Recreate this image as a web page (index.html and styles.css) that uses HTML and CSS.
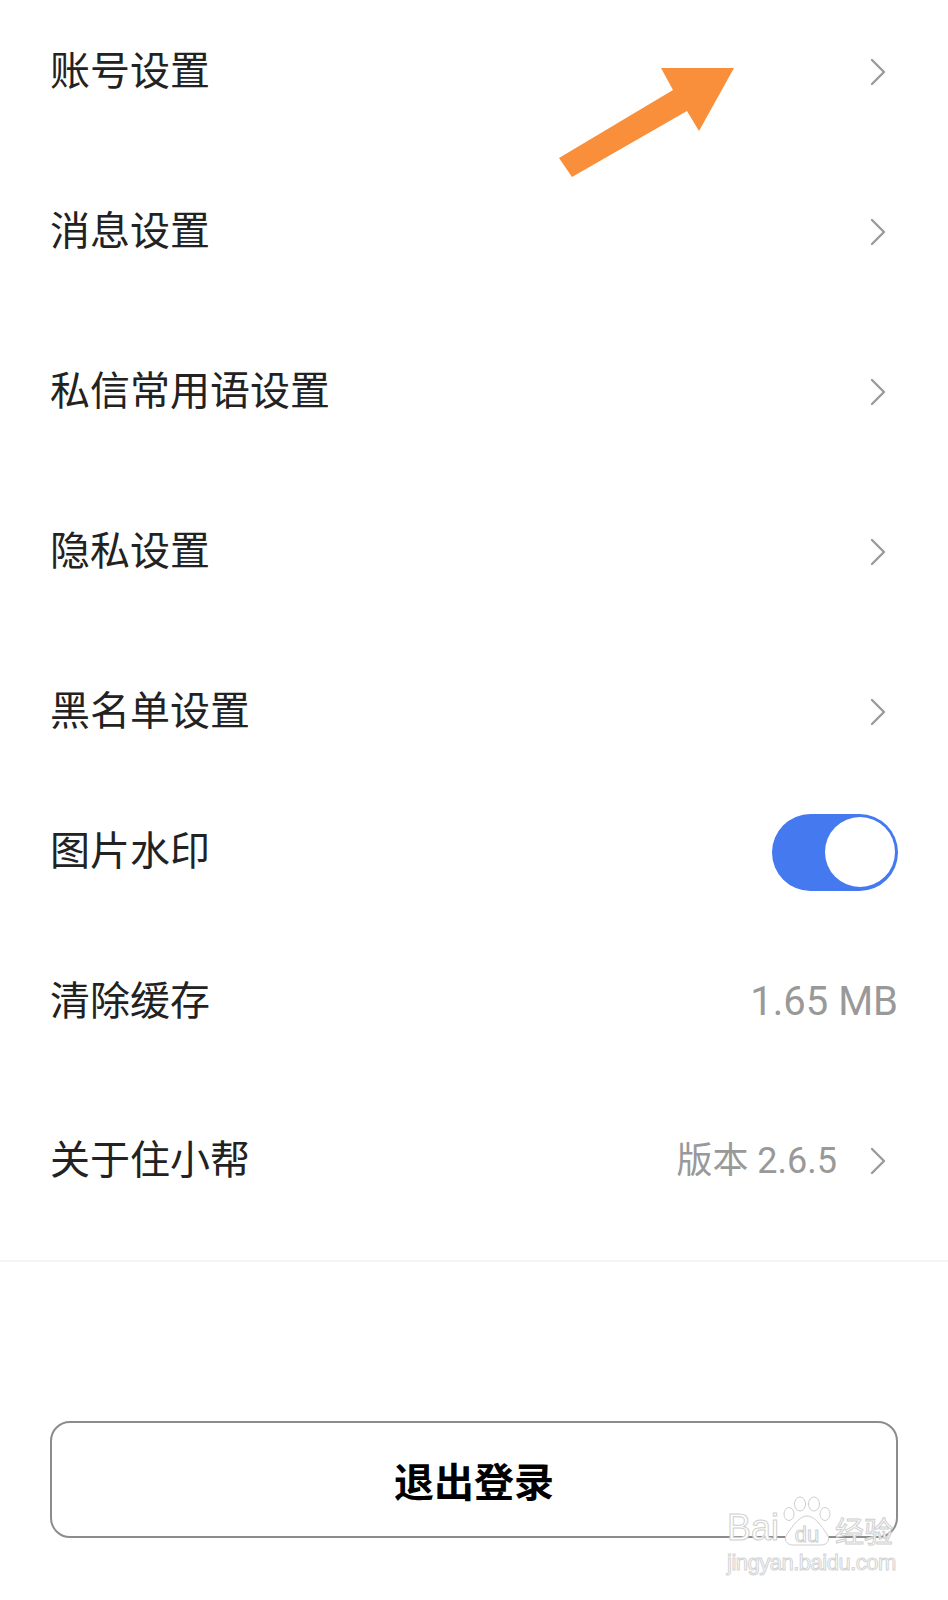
FILE: index.html
```html
<!DOCTYPE html>
<html lang="zh-CN">
<head>
  <meta charset="UTF-8" />
  <meta name="viewport" content="width=device-width, initial-scale=1.0"/>
  <title>设置</title>
  <link rel="stylesheet" href="styles.css">
</head>
<body>
  <div class="page">
    <!-- 设置列表 -->
    <div class="list">
      <div class="row">
        <span class="label">账号设置</span>
        <svg class="chevron" viewBox="0 0 16 28"><path d="M2 2 L14 14 L2 26" /></svg>
      </div>
      <div class="row">
        <span class="label">消息设置</span>
        <svg class="chevron" viewBox="0 0 16 28"><path d="M2 2 L14 14 L2 26" /></svg>
      </div>
      <div class="row">
        <span class="label">私信常用语设置</span>
        <svg class="chevron" viewBox="0 0 16 28"><path d="M2 2 L14 14 L2 26" /></svg>
      </div>
      <div class="row">
        <span class="label">隐私设置</span>
        <svg class="chevron" viewBox="0 0 16 28"><path d="M2 2 L14 14 L2 26" /></svg>
      </div>
      <div class="row">
        <span class="label">黑名单设置</span>
        <svg class="chevron" viewBox="0 0 16 28"><path d="M2 2 L14 14 L2 26" /></svg>
      </div>
      <div class="row row-switch">
        <span class="label">图片水印</span>
        <div class="switch on"><div class="knob"></div></div>
      </div>
      <div class="row row-cache">
        <span class="label">清除缓存</span>
        <span class="size">1.65 MB</span>
      </div>
      <div class="row row-about">
        <span class="label">关于住小帮</span>
        <span class="version">版本 2.6.5</span>
        <svg class="chevron" viewBox="0 0 16 28"><path d="M2 2 L14 14 L2 26" /></svg>
      </div>
    </div>

    <div class="divider"></div>

    <button class="logout">退出登录</button>
  </div>

  <!-- 标注箭头 -->
  <svg class="arrow" viewBox="0 0 948 200">
    <polygon points="734,68 661,68 673,90 559,158 572,177 687,111 699,131" />
  </svg>

  <!-- 水印 -->
  <div class="watermark">
    <div class="wm-top">
      <span class="wm-bai">Bai</span>
      <svg class="wm-paw" viewBox="0 0 52 50">
        <ellipse cx="8" cy="18" rx="5" ry="6.5" />
        <ellipse cx="19" cy="8" rx="5.5" ry="7" />
        <ellipse cx="33" cy="8" rx="5.5" ry="7" />
        <ellipse cx="44" cy="18" rx="5" ry="6.5" />
        <path d="M26 20 C34 20 40 30 46 38 C50 44 46 49 40 49 L12 49 C6 49 2 44 6 38 C12 30 18 20 26 20 Z" />
        <text x="26" y="46" text-anchor="middle">du</text>
      </svg>
      <span class="wm-jy">经验</span>
    </div>
    <div class="wm-url">jingyan.baidu.com</div>
  </div>
</body>
</html>
```

FILE: styles.css
```css
body {
  margin: 0;
  background: #ffffff;
  font-family: Roboto, "Noto Sans CJK SC", sans-serif;
  color: #222222;
  overflow: hidden;
}
.page {
  padding: 0 50px;
}
.list {
  margin-top: -8px;
}
.row {
  height: 160px;
  display: flex;
  align-items: center;
}
.row-switch { height: 120px; }
.row-cache { height: 180px; }
.row-about { height: 138px; }
.label {
  flex: 1;
  font-size: 40px;
  line-height: 1;
}
.chevron {
  width: 16px;
  height: 28px;
  margin-right: 12px;
}
.chevron path {
  fill: none;
  stroke: #9a9a9a;
  stroke-width: 2.4;
  stroke-linecap: round;
  stroke-linejoin: round;
}
.size {
  font-size: 40px;
  line-height: 1;
  color: #999999;
}
.version {
  font-size: 36px;
  line-height: 1;
  color: #999999;
  margin-right: 33px;
}
.switch {
  width: 126px;
  height: 77px;
  border-radius: 39px;
  background: #4479f0;
  display: flex;
  align-items: center;
  justify-content: flex-end;
  padding: 0 3px;
  box-sizing: border-box;
}
.knob {
  width: 70px;
  height: 70px;
  border-radius: 50%;
  background: #ffffff;
}
.divider {
  height: 2px;
  margin: 30px -50px 0;
  background: #f4f4f4;
}
.logout {
  display: block;
  width: 100%;
  height: 117px;
  margin-top: 159px;
  background: #ffffff;
  border: 2px solid #8c8c8c;
  border-radius: 20px;
  font-family: Roboto, "Noto Sans CJK SC", sans-serif;
  font-size: 40px;
  font-weight: bold;
  color: #000000;
}
.arrow {
  position: absolute;
  top: 0;
  left: 0;
  width: 948px;
  height: 200px;
}
.arrow polygon { fill: #f98f3a; }
.watermark {
  position: absolute;
  left: 727px;
  top: 1496px;
  width: 180px;
}
.wm-top {
  display: flex;
  align-items: flex-end;
}
.wm-bai, .wm-jy {
  font-family: "Liberation Sans", sans-serif;
  font-size: 36px;
  line-height: 1;
  color: #ffffff;
  -webkit-text-stroke: 1px #cfcfcf;
}
.wm-jy {
  font-family: "Noto Sans CJK SC", sans-serif;
  font-size: 29px;
  margin-bottom: 1px;
}
.wm-paw {
  width: 52px;
  height: 50px;
  margin: 0 2px;
}
.wm-paw ellipse, .wm-paw path {
  fill: #ffffff;
  stroke: #cfcfcf;
  stroke-width: 1;
}
.wm-paw text {
  font-family: "Liberation Sans", sans-serif;
  font-size: 22px;
  fill: #ffffff;
  stroke: #cfcfcf;
  stroke-width: 1;
}
.wm-url {
  margin-top: 4px;
  font-family: "Liberation Sans", sans-serif;
  font-size: 22px;
  letter-spacing: -0.5px;
  color: #ffffff;
  -webkit-text-stroke: 1px #d4d4d4;
}
```
